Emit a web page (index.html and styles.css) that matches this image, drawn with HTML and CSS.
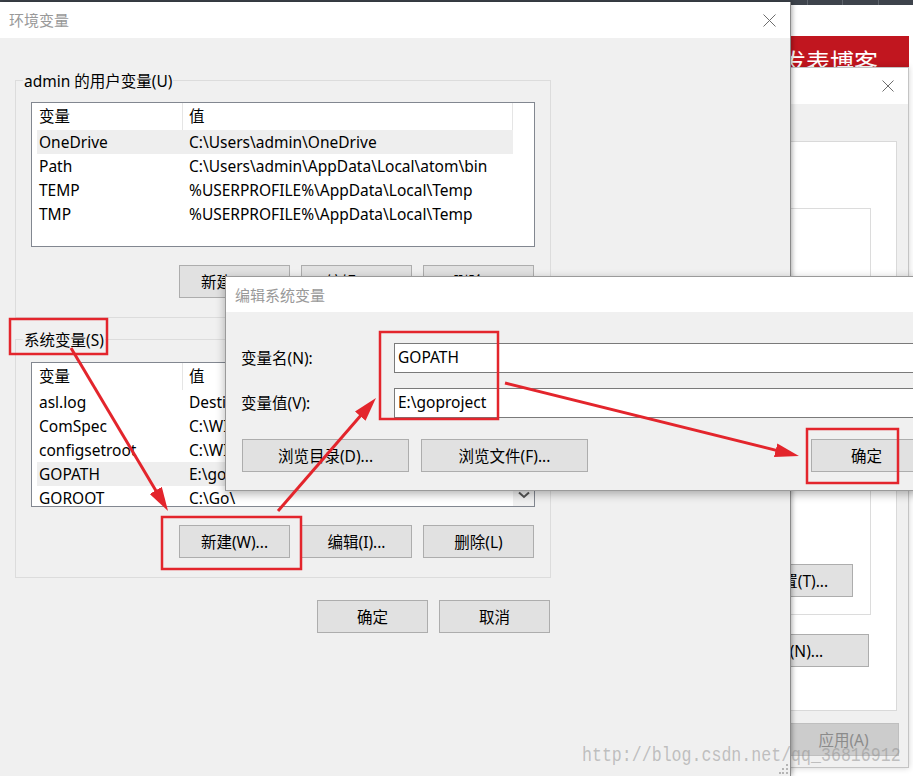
FILE: index.html
```html
<!DOCTYPE html>
<html lang="zh-CN">
<head>
<meta charset="utf-8">
<title>环境变量</title>
<link rel="stylesheet" href="styles.css">
</head>
<body>
<div class="desk">
  <div class="topbar"><span class="tab"></span><span class="tab"></span><span class="tab"></span></div>
  <div class="banner">发表博客</div>

  <section class="win win-sys">
    <header class="titlebar">
      <span class="title">系统属性</span>
      <svg class="close" width="12" height="12" viewBox="0 0 12 12"><path d="M0.5 0.5L11.5 11.5M11.5 0.5L0.5 11.5" stroke="#6d6d6d" stroke-width="1" fill="none"/></svg>
    </header>
    <div class="win-body sys-body">
      <div class="sys-panel">
        <div class="sys-group">
          <button class="btn">设置(T)...</button>
        </div>
        <button class="btn btn-env">环境变量(N)...</button>
      </div>
      <div class="sys-footer">
        <button class="btn">确定</button>
        <button class="btn">取消</button>
        <button class="btn btn-disabled">应用(A)</button>
      </div>
    </div>
  </section>

  <section class="win win-env">
    <header class="titlebar">
      <span class="title">环境变量</span>
      <svg class="close" width="13" height="13" viewBox="0 0 13 13"><path d="M0.5 0.5L12.5 12.5M12.5 0.5L0.5 12.5" stroke="#6d6d6d" stroke-width="1" fill="none"/></svg>
    </header>
    <div class="win-body env-body">
      <div class="group g-user">
        <span class="group-label">admin 的用户变量(U)</span>
        <div class="listview">
          <div class="lv-head"><span class="c1">变量</span><span class="c2">值</span></div>
          <div class="lv-row sel"><span class="c1">OneDrive</span><span class="c2">C:\Users\admin\OneDrive</span></div>
          <div class="lv-row"><span class="c1">Path</span><span class="c2">C:\Users\admin\AppData\Local\atom\bin</span></div>
          <div class="lv-row"><span class="c1">TEMP</span><span class="c2">%USERPROFILE%\AppData\Local\Temp</span></div>
          <div class="lv-row"><span class="c1">TMP</span><span class="c2">%USERPROFILE%\AppData\Local\Temp</span></div>
        </div>
        <div class="btnrow">
          <button class="btn">新建(W)...</button>
          <button class="btn">编辑(E)...</button>
          <button class="btn">删除(D)</button>
        </div>
      </div>

      <div class="group g-sys">
        <span class="group-label">系统变量(S)</span>
        <div class="listview">
          <div class="lv-head"><span class="c1">变量</span><span class="c2">值</span></div>
          <div class="lv-row"><span class="c1">asl.log</span><span class="c2">Destination=file</span></div>
          <div class="lv-row"><span class="c1">ComSpec</span><span class="c2">C:\WINDOWS\system32\cmd.exe</span></div>
          <div class="lv-row"><span class="c1">configsetroot</span><span class="c2">C:\WINDOWS\ConfigSetRoot</span></div>
          <div class="lv-row sel"><span class="c1">GOPATH</span><span class="c2">E:\goproject</span></div>
          <div class="lv-row"><span class="c1">GOROOT</span><span class="c2">C:\Go\</span></div>
          <span class="scroll-down"><svg width="12" height="8" viewBox="0 0 12 8"><path d="M1 1.5L6 6L11 1.5" stroke="#555" stroke-width="2" fill="none"/></svg></span>
        </div>
        <div class="btnrow">
          <button class="btn">新建(W)...</button>
          <button class="btn">编辑(I)...</button>
          <button class="btn">删除(L)</button>
        </div>
      </div>

      <div class="dlg-buttons">
        <button class="btn">确定</button>
        <button class="btn">取消</button>
      </div>
      <svg class="grip" width="10" height="12" viewBox="0 0 10 12">
        <rect x="7" y="1" width="2" height="2" fill="#b5b5b5"/>
        <rect x="7" y="5" width="2" height="2" fill="#b5b5b5"/>
        <rect x="3" y="5" width="2" height="2" fill="#b5b5b5"/>
        <rect x="7" y="9" width="2" height="2" fill="#b5b5b5"/>
        <rect x="3" y="9" width="2" height="2" fill="#b5b5b5"/>
        <rect x="0" y="9" width="2" height="2" fill="#b5b5b5"/>
      </svg>
    </div>
  </section>

  <section class="win win-edit">
    <header class="titlebar">
      <span class="title">编辑系统变量</span>
    </header>
    <div class="win-body edit-body">
      <div class="field">
        <label class="field-label">变量名(N):</label>
        <div class="input">GOPATH</div>
      </div>
      <div class="field">
        <label class="field-label">变量值(V):</label>
        <div class="input">E:\goproject</div>
      </div>
      <div class="edit-buttons">
        <button class="btn btn-wide">浏览目录(D)...</button>
        <button class="btn btn-wide">浏览文件(F)...</button>
        <div class="edit-confirm">
          <button class="btn">确定</button>
          <button class="btn">取消</button>
        </div>
      </div>
    </div>
  </section>

  <div class="watermark">http://blog.csdn.net/qq_36816912</div>

  <svg class="annot" width="913" height="776" viewBox="0 0 913 776">
    <defs>
      <marker id="ah" viewBox="0 0 24 14" refX="12" refY="7" markerWidth="24" markerHeight="14" markerUnits="userSpaceOnUse" orient="auto">
        <path d="M0 0L24 7L0 14Z" fill="#e3252c"/>
      </marker>
    </defs>
    <g fill="none" stroke="#e3252c" stroke-width="2.5">
      <rect x="10" y="319" width="97" height="35"/>
      <rect x="162" y="517" width="139" height="52"/>
      <rect x="380" y="332" width="118" height="87"/>
      <rect x="807" y="429" width="91" height="54"/>
    </g>
    <g stroke="#e3252c" stroke-width="3" fill="none">
      <line x1="71" y1="348" x2="161.9" y2="500.7" marker-end="url(#ah)"/>
      <line x1="278" y1="511" x2="368.1" y2="407.1" marker-end="url(#ah)"/>
      <line x1="505" y1="383" x2="787.3" y2="453.1" marker-end="url(#ah)"/>
    </g>
  </svg>
</div>
</body>
</html>
```

FILE: styles.css
```css
* {
  box-sizing: border-box;
  margin: 0;
  padding: 0;
}

html, body {
  width: 913px;
  height: 776px;
  overflow: hidden;
}

body {
  background: #ffffff;
  font-family: "Noto Sans", "Noto Sans CJK SC", sans-serif;
  font-size: 15.5px;
  line-height: 20px;
  color: #000;
}

.desk {
  position: relative;
  width: 913px;
  height: 776px;
  overflow: hidden;
  background: #ffffff;
}

/* background web page */
.topbar {
  position: absolute;
  left: 0;
  top: 0;
  width: 913px;
  height: 5px;
  background: #3d434b;
  display: flex;
  padding-left: 807px;
}

.tab {
  width: 52px;
  height: 5px;
  border-left: 1px solid #5d636b;
}

.banner {
  position: absolute;
  left: 760px;
  top: 36px;
  width: 149px;
  height: 60px;
  background: #c1161f;
  color: #ffffff;
  font-family: "Noto Sans CJK SC", sans-serif;
  font-size: 24px;
  line-height: 24px;
  padding: 13px 0 0 22px;
  white-space: nowrap;
}

/* windows */
.win {
  position: absolute;
  display: flex;
  flex-direction: column;
  background: #f0f0f0;
}

.titlebar {
  flex: 0 0 auto;
  height: 36px;
  background: #ffffff;
  display: flex;
  align-items: center;
  justify-content: space-between;
  padding: 0 14px 0 9px;
}

.title {
  color: #999999;
  font-family: "Noto Sans CJK SC", sans-serif;
  font-size: 15px;
}

.win-body {
  flex: 1 1 auto;
  position: relative;
}

.btn {
  width: 111px;
  height: 33px;
  flex: 0 0 auto;
  background: #e1e1e1;
  border: 1px solid #adadad;
  font: inherit;
  color: #000;
  display: flex;
  align-items: center;
  justify-content: center;
  white-space: nowrap;
}

/* system properties (behind) */
.win-sys {
  left: 400px;
  top: 67px;
  width: 509px;
  height: 701px;
  border: 1px solid #c4c4c4;
  box-shadow: 0 0 6px rgba(0, 0, 0, 0.18);
}

.win-sys .titlebar {
  height: 36px;
  padding-right: 14px;
}

.sys-body {
  display: flex;
  flex-direction: column;
  align-items: flex-end;
  padding: 37px 11px 0 0;
}

.sys-panel {
  width: 470px;
  height: 570px;
  background: #ffffff;
  border: 1px solid #d9d9d9;
  padding: 66px 25px 0 0;
  display: flex;
  flex-direction: column;
  align-items: flex-end;
}

.sys-group {
  width: 420px;
  height: 407px;
  border: 1px solid #dcdcdc;
  display: flex;
  flex-direction: column;
  justify-content: flex-end;
  align-items: flex-end;
  padding: 0 17px 17px 0;
}

.btn-env {
  width: 187px;
  margin-top: 19px;
  margin-right: 2px;
}

.sys-footer {
  display: flex;
  gap: 11px;
  margin-top: 12px;
  margin-right: -2px;
}

.btn-disabled {
  background: #cccccc;
  border-color: #bfbfbf;
  color: #8b8b8b;
}

/* environment variables dialog */
.win-env {
  left: 0;
  top: 2px;
  width: 791px;
  height: 774px;
  border-right: 1px solid #8a8a8a;
  box-shadow: 1px 0 5px rgba(0, 0, 0, 0.35);
}

.env-body {
  padding: 42px 0 0 15px;
}

.group {
  position: relative;
  width: 536px;
  border: 1px solid #dcdcdc;
  padding: 21px 15px 19px 15px;
}

.g-sys {
  margin-top: 21px;
  padding-top: 22px;
}

.group-label {
  position: absolute;
  top: -10px;
  left: 7px;
  padding: 0 1px;
  background: #f0f0f0;
  line-height: 20px;
}

.listview {
  position: relative;
  height: 145px;
  background: #ffffff;
  border: 1px solid #828790;
  padding-left: 5px;
  overflow: hidden;
}

.lv-head,
.lv-row {
  display: flex;
  width: 476px;
  white-space: nowrap;
}

.lv-head {
  height: 27px;
  align-items: center;
}

.lv-head .c1 {
  border-right: 1px solid #e5e5e5;
  height: 27px;
  line-height: 27px;
}

.lv-head .c2 {
  border-right: 1px solid #e5e5e5;
  height: 27px;
  line-height: 27px;
}

.lv-row {
  height: 24px;
  line-height: 24px;
}

.lv-row.sel {
  background: #eeeeee;
}

.c1 {
  width: 146px;
  padding-left: 2px;
  overflow: hidden;
}

.c2 {
  width: 330px;
  padding-left: 6px;
  overflow: hidden;
}

.scroll-down {
  position: absolute;
  right: 0;
  bottom: 0;
  width: 21px;
  height: 23px;
  background: #f0f0f0;
  display: flex;
  align-items: center;
  justify-content: center;
}

.btnrow {
  display: flex;
  justify-content: flex-end;
  gap: 11px;
  margin-top: 18px;
  padding-right: 1px;
}

.dlg-buttons {
  width: 536px;
  display: flex;
  justify-content: flex-end;
  gap: 11px;
  margin-top: 22px;
  padding-right: 1px;
}

.grip {
  position: absolute;
  right: 1px;
  bottom: 1px;
}

/* edit dialog */
.win-edit {
  left: 225px;
  top: 276px;
  width: 835px;
  height: 215px;
  border: 1px solid #9a9a9a;
  box-shadow: 0 3px 9px rgba(0, 0, 0, 0.3);
}

.win-edit .titlebar {
  height: 35px;
}

.edit-body {
  padding: 31px 15px 0 15px;
}

.field {
  display: grid;
  grid-template-columns: 153px 1fr;
  align-items: center;
}

.field + .field {
  margin-top: 15px;
}

.field-label {
  line-height: 20px;
}

.input {
  height: 30px;
  background: #ffffff;
  border: 1px solid #7a7a7a;
  padding-left: 3px;
  line-height: 26px;
}

.edit-buttons {
  display: flex;
  gap: 12px;
  margin-top: 21px;
  padding-left: 1px;
}

.btn-wide {
  width: 167px;
}

.edit-confirm {
  display: flex;
  gap: 11px;
  margin-left: auto;
}

/* overlays */
.watermark {
  position: absolute;
  left: 582px;
  top: 746px;
  font-family: "Liberation Mono", monospace;
  font-size: 16.6px;
  line-height: 20px;
  color: rgba(140, 140, 140, 0.5);
  transform: scaleY(1.25);
  transform-origin: left center;
  white-space: nowrap;
}

.annot {
  position: absolute;
  left: 0;
  top: 0;
  pointer-events: none;
}
```
